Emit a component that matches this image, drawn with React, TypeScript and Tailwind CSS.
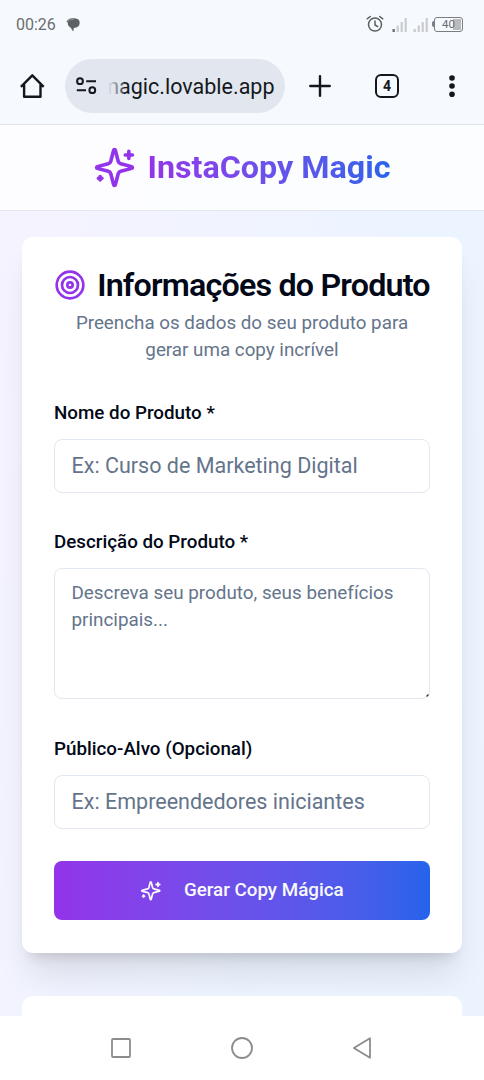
import { Target } from 'lucide-react';

const inputClass =
  'block w-full h-[54px] rounded-[8px] border border-[#e2e8f0] bg-white px-[16.5px] pb-px text-[21.52px] text-[#020817] placeholder:text-[#64748b] outline-none';
const labelClass =
  'block h-[36px] mb-[8px] text-[18.8px] leading-[36px] font-medium text-[#020817]';

const Sparkles = ({ className }: { className: string }) => (
  <svg
    viewBox="0 0 24 24"
    fill="none"
    stroke="currentColor"
    strokeWidth="2"
    strokeLinecap="round"
    strokeLinejoin="round"
    className={className}
  >
    <path d="M9.937 15.5A2 2 0 0 0 8.5 14.063l-6.135-1.582a.5.5 0 0 1 0-.962L8.5 9.936A2 2 0 0 0 9.937 8.5l1.582-6.135a.5.5 0 0 1 .963 0L14.063 8.5A2 2 0 0 0 15.5 9.937l6.135 1.581a.5.5 0 0 1 0 .964L15.5 14.063a2 2 0 0 0-1.437 1.437l-1.582 6.135a.5.5 0 0 1-.963 0z" />
    <path d="M20 3v4M22 5h-4M4 17v2M5 18H3" />
  </svg>
);

const Signal = ({ first }: { first: string }) => (
  <svg width="16" height="16" viewBox="0 0 16 16" fill="#c9cbce">
    <rect x="0.5" y="12" width="2.4" height="3" rx="0.5" fill={first} />
    <rect x="4.6" y="8.5" width="2.2" height="6.5" rx="0.5" />
    <rect x="8.6" y="5" width="2.2" height="10" rx="0.5" />
    <rect x="12.6" y="1" width="2.2" height="14" rx="0.5" />
  </svg>
);

const StatusBar = () => (
  <div className="h-12 flex items-center justify-between pl-4 pr-[21px] pt-[1px] text-[#6a6d70]">
    <div className="flex items-center gap-[10px]">
      <span className="text-[16px] leading-5 pt-px">00:26</span>
      <svg width="15" height="14" viewBox="0 0 15 14" fill="#5f6265">
        <path d="M2.5 1.4C5.5-.3 11 .1 12.6 1.8 14.6 3.8 13.8 8.7 10.4 9.6 9.3 9.9 8.4 10 7.7 10.2L7.4 13.5C6.3 12.5 5.5 11.4 4.8 9.8 2.6 8.6 1.7 7 1.8 4.8L.5 3.7C.8 2.6 1.5 1.9 2.5 1.4Z" />
        <path d="M.9 3.8C2.5 2 4.5 1.5 7.6 1.5" fill="none" stroke="#a5a8aa" strokeWidth="0.7" />
      </svg>
    </div>
    <div className="flex items-center">
      <svg
        width="18"
        height="18"
        viewBox="0 0 18 18"
        fill="none"
        stroke="#5b5e61"
        strokeWidth="1.5"
        strokeLinecap="round"
        className="mr-[8px] -mt-px"
      >
        <circle cx="9" cy="9.6" r="6.5" />
        <path d="M9 6v4l2.6 1.5M1.2 3.8 4.3 1.5M16.8 3.8 13.7 1.5" />
      </svg>
      <div className="flex gap-[5px] mr-[3px]">
        <Signal first="#6a6d70" />
        <Signal first="#c9cbce" />
      </div>
      <div className="flex items-center -mt-px">
        <div className="w-[2px] h-[6px] bg-[#7b7e81] rounded-l-sm" />
        <div className="relative w-[29px] h-[15px] rounded-[3px] border-[1.5px] border-[#7b7e81] p-px flex justify-end">
          <div className="w-[8px] h-full bg-[#b9bbbd]" />
          <span className="absolute inset-0 text-center text-[11.5px] leading-[13px]">40</span>
        </div>
      </div>
    </div>
  </div>
);

const BrowserBar = () => (
  <div className="h-[77px] flex items-start border-b border-[#dde2e8] pl-5 text-[#14181c]">
    <svg
      width="25"
      height="27"
      viewBox="0 0 25 27"
      fill="none"
      stroke="currentColor"
      strokeWidth="2.4"
      strokeLinejoin="round"
      className="mt-[25px] mr-5 shrink-0"
    >
      <path d="M.9 13.8 12.3 2.3 23.7 13.8M4.1 11.5V23.8H20.5V11.5" />
    </svg>
    <div className="mt-[11px] w-[220px] h-[54px] shrink-0 rounded-full bg-[#e2e7ef] flex items-center pl-[11px]">
      <svg
        width="21"
        height="18"
        viewBox="0 0 21 18"
        fill="none"
        stroke="currentColor"
        strokeWidth="2"
        className="mr-[11px] shrink-0"
      >
        <circle cx="4" cy="4.2" r="2.9" />
        <path d="M10.2 4.2H20M.8 13.2H10" />
        <circle cx="16.3" cy="13.2" r="2.9" />
      </svg>
      <div className="relative w-[166.5px] pt-[2px] overflow-hidden flex justify-end">
        <span className="text-[21.5px] leading-8 whitespace-nowrap">magic.lovable.app</span>
        <div className="absolute left-0 top-0 w-[16px] h-full bg-linear-to-r from-[#e2e7ef] to-[#e2e7ef]/20" />
      </div>
    </div>
    <svg
      width="22"
      height="22"
      viewBox="0 0 22 22"
      stroke="currentColor"
      strokeWidth="2.4"
      strokeLinecap="round"
      className="mt-[27px] ml-6 shrink-0"
    >
      <path d="M11 1.3v19.4M1.3 11h19.4" />
    </svg>
    <div className="mt-[26px] ml-[44px] w-6 h-6 shrink-0 rounded-[6px] border-[2.5px] border-[#14181c] flex items-center justify-center text-[14px] leading-none font-bold">
      4
    </div>
    <svg width="8" height="24" viewBox="0 0 8 24" fill="currentColor" className="mt-[26px] ml-[49px] shrink-0">
      <circle cx="4" cy="4" r="2.8" />
      <circle cx="4" cy="12" r="2.8" />
      <circle cx="4" cy="20.2" r="2.8" />
    </svg>
  </div>
);

const Header = () => (
  <header className="h-[86px] shrink-0 bg-white/80 border-b border-[#e2e8f0] flex items-center justify-center gap-[11px] pb-px">
    <Sparkles className="w-[43px] h-[43px] text-[#9333ea]" />
    <h1 className="text-[32.25px] leading-[43px] font-bold bg-linear-to-r from-[#9333ea] to-[#2563eb] bg-clip-text text-transparent">
      InstaCopy Magic
    </h1>
  </header>
);

const ProductForm = () => (
  <div className="h-[716px] shrink-0 rounded-[11px] bg-white p-8 shadow-[0_27px_34px_-7px_rgba(0,0,0,0.1),0_11px_13px_-8px_rgba(0,0,0,0.14)]">
    <div className="text-center mb-[31px]">
      <h2 className="h-8 mb-[9px] flex items-center justify-center gap-[11px] text-[32.25px] leading-8 font-semibold tracking-tight text-[#020817] whitespace-nowrap">
        <Target className="w-8 h-8 shrink-0 text-[#9333ea]" />
        Informações do Produto
      </h2>
      <p className="text-[18.8px] leading-[27px] text-[#64748b]">
        Preencha os dados do seu produto para
        <br />
        gerar uma copy incrível
      </p>
    </div>
    <form className="flex flex-col">
      <div className="mb-[31px]">
        <label className={labelClass}>Nome do Produto *</label>
        <input className={inputClass} placeholder="Ex: Curso de Marketing Digital" />
      </div>
      <div className="mb-8">
        <label className={labelClass}>Descrição do Produto *</label>
        <div className="relative">
          <textarea
            className="block w-full h-[131px] resize-none rounded-[8px] border border-[#e2e8f0] bg-white px-[16.5px] py-[11px] text-[18.85px] leading-[27px] placeholder:text-[#64748b] outline-none"
            placeholder="Descreva seu produto, seus benefícios principais..."
          />
          <svg width="3" height="3" viewBox="0 0 3 3" className="absolute right-[1px] bottom-[2px]">
            <path d="M.5 2.5l2-2" stroke="#333" strokeWidth="1.2" />
          </svg>
        </div>
      </div>
      <div className="mb-8">
        <label className={labelClass}>Público-Alvo (Opcional)</label>
        <input className={inputClass} placeholder="Ex: Empreendedores iniciantes" />
      </div>
      <button
        type="button"
        className="h-[59px] rounded-[8px] bg-linear-to-r from-[#9333ea] to-[#2563eb] flex items-center justify-center gap-[22px] text-[18.8px] font-medium text-[#f8fafc]"
      >
        <Sparkles className="w-[21.5px] h-[21.5px]" />
        Gerar Copy Mágica
      </button>
    </form>
  </div>
);

const NavBar = () => (
  <nav className="h-16 shrink-0 bg-white flex items-center justify-center text-[#8c8c8c]">
    <svg width="20" height="20" viewBox="0 0 20 20" fill="none" stroke="currentColor" strokeWidth="1.8">
      <rect x="1" y="1" width="18" height="18" rx="1" />
    </svg>
    <svg width="22" height="22" viewBox="0 0 22 22" fill="none" stroke="currentColor" strokeWidth="1.8" className="mx-[100px]">
      <circle cx="11" cy="11" r="10" />
    </svg>
    <svg width="20" height="22" viewBox="0 0 20 22" fill="none" stroke="currentColor" strokeWidth="1.8" strokeLinejoin="round">
      <path d="M17 1.2v19.6L.9 11Z" />
    </svg>
  </nav>
);

const App = () => {
  return (
    <div className="w-[484px] h-[1080px] overflow-hidden flex flex-col bg-white font-[Roboto,sans-serif]">
      <div className="shrink-0 bg-[#f6faff]">
        <StatusBar />
        <BrowserBar />
      </div>
      <div className="h-[891px] shrink-0 overflow-hidden">
        <div className="h-[2400px] flex flex-col bg-linear-to-br from-[#f6f3ff] via-[#ebf4ff] to-[#eef2ff]">
          <Header />
          <main className="flex flex-col gap-[43px] px-[22px] pt-[26px]">
            <ProductForm />
            <div className="h-[400px] rounded-[11px] bg-white" />
          </main>
        </div>
      </div>
      <NavBar />
    </div>
  );
};

export default App;
